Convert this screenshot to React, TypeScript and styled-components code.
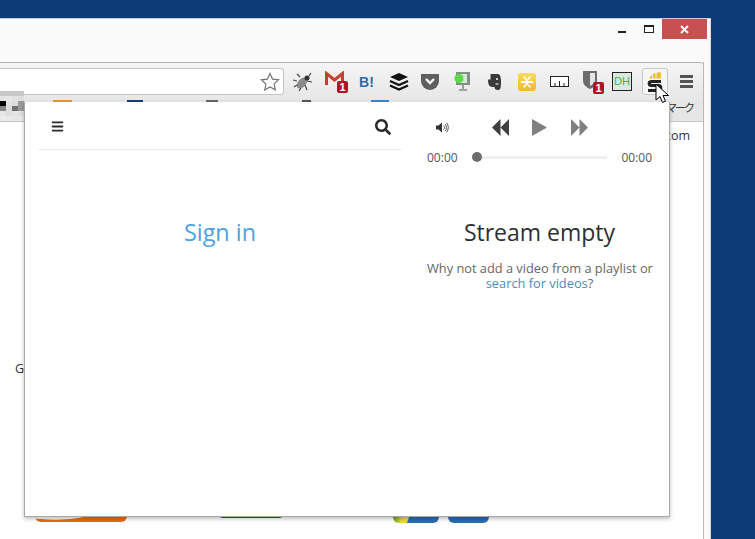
import React from 'react';
import styled, { createGlobalStyle, css } from 'styled-components';
import { FaBars, FaSearch } from 'react-icons/fa';

const GlobalStyle = createGlobalStyle`
  html, body {
    margin: 0;
    padding: 0;
    height: 539px;
    overflow: hidden;
    background: #0c3b78;
    font-family: "Open Sans", "Noto Sans CJK JP", sans-serif;
  }
`;

const Desktop = styled.div`
  width: 755px;
  height: 539px;
  padding-top: 18px;
  box-sizing: border-box;
  position: relative;
  overflow: hidden;
`;

const BrowserWindow = styled.div`
  width: 711px;
  height: 521px;
  box-sizing: border-box;
  background: #fafafa;
  border-top: 1px solid #c9ccd2;
  border-right: 1px solid #d8d8d8;
  display: flex;
  flex-direction: column;
`;

const TitleBar = styled.div`
  height: 43px;
  flex: none;
  display: flex;
  justify-content: flex-end;
  align-items: flex-start;
  padding-right: 3px;
`;

const Caption = styled.div`
  width: 27px;
  height: 20px;
  display: flex;
  align-items: center;
  justify-content: center;
`;

const CloseButton = styled.div`
  width: 45px;
  height: 20px;
  background: #c75050;
  display: flex;
  align-items: center;
  justify-content: center;
`;

const Chrome = styled.div`
  width: 704px;
  flex: 1;
  display: flex;
  flex-direction: column;
  border-right: 1px solid #b8b8b8;
  box-sizing: border-box;
  min-height: 0;
`;

const Toolbar = styled.div`
  height: 38px;
  flex: none;
  box-sizing: border-box;
  border-top: 1px solid #b2b2b2;
  border-top-right-radius: 3px;
  background: linear-gradient(#f5f5f5, #e7e7e7);
  display: flex;
  align-items: center;
`;

const Omnibox = styled.div`
  width: 284px;
  height: 27px;
  flex: none;
  box-sizing: border-box;
  background: #fff;
  border: 1px solid #c6c6c6;
  border-left: none;
  border-radius: 0 3px 3px 0;
  display: flex;
  align-items: center;
  justify-content: flex-end;
  padding-right: 3px;
`;

const Tool = styled.div<{ $w: number; $ml?: number; $active?: boolean }>`
  width: ${(p) => p.$w}px;
  margin-left: ${(p) => p.$ml ?? 0}px;
  height: 27px;
  flex: none;
  display: flex;
  align-items: center;
  justify-content: center;
  box-sizing: border-box;
  ${(p) =>
    p.$active &&
    css`
      border: 1px solid #c8c8c8;
      border-radius: 3px;
      background: #f6f6f6;
    `}
`;

const BookmarkBar = styled.div`
  height: 22px;
  flex: none;
  box-sizing: border-box;
  background: #e6e6e6;
  border-bottom: 1px solid #c8c8c8;
  display: flex;
  align-items: flex-start;
  padding-right: 8px;
  color: #333;
`;

const BookmarkTip = styled.span<{ $ml: number; $w: number; $c: string }>`
  margin-left: ${(p) => p.$ml}px;
  width: ${(p) => p.$w}px;
  height: 2px;
  background: ${(p) => p.$c};
  flex: none;
`;

const BookmarkLabel = styled.span`
  margin-left: auto;
  font-size: 11px;
  letter-spacing: -2px;
  line-height: 15px;
  padding: 0 2px 0 0;
`;

const Page = styled.div`
  flex: 1;
  min-height: 0;
  background: #fff;
  display: flex;
  flex-direction: column;
  font-size: 12.5px;
  color: #333;
`;

const PageDomain = styled.div`
  text-align: right;
  padding: 5px 13px 0 0;
  line-height: 17px;
`;

const PageLetter = styled.div`
  padding: 216px 0 0 15px;
  line-height: 17px;
`;

const TileRow = styled.div`
  margin-top: 123px;
  display: flex;
  align-items: flex-start;
  padding-left: 35px;
`;

const Tile = styled.div<{ $w: number; $h: number; $mr: number; $bg: string }>`
  width: ${(p) => p.$w}px;
  height: ${(p) => p.$h}px;
  margin-right: ${(p) => p.$mr}px;
  background: ${(p) => p.$bg};
  border-radius: 0 0 6px 6px;
`;

const Pixels = styled.div`
  position: absolute;
  left: 0;
  top: 91px;
  width: 24px;
  display: grid;
  grid-template-columns: repeat(4, 6px);
  grid-auto-rows: 5px;
`;

const Pixel = styled.span<{ $c: string }>`
  background: ${(p) => p.$c};
`;

const Popup = styled.div`
  position: absolute;
  left: 24px;
  top: 102px;
  width: 646px;
  height: 415px;
  box-sizing: border-box;
  background: #fff;
  border: 1px solid #a8a8a8;
  border-top: none;
  box-shadow: 0 2px 4px rgba(0, 0, 0, 0.25);
  display: flex;
`;

const LeftPane = styled.div`
  width: 364px;
  margin-left: 13px;
  flex: none;
  display: flex;
  flex-direction: column;
`;

const LeftHeader = styled.div`
  height: 48px;
  flex: none;
  box-sizing: border-box;
  border-bottom: 1px solid #ececec;
  display: flex;
  align-items: center;
  justify-content: space-between;
  padding: 2px 11px 0 13px;
  color: #2b2b2b;
`;

const SignIn = styled.a`
  margin-top: 64px;
  text-align: center;
  font-size: 23.4px;
  line-height: 36px;
  color: #4fa1dc;
`;

const RightPane = styled.div`
  flex: 1;
  min-width: 0;
  padding: 0 17px 0 25px;
  display: flex;
  flex-direction: column;
`;

const Controls = styled.div`
  height: 47px;
  flex: none;
  display: flex;
  align-items: center;
  padding: 3px 0 0 9px;
  box-sizing: border-box;
`;

const Transport = styled.div`
  margin-left: 42px;
  display: flex;
  align-items: center;
  gap: 23px;
`;

const SeekRow = styled.div`
  display: flex;
  align-items: center;
  height: 16px;
  font-size: 12px;
  color: #555;
`;

const Track = styled.div`
  flex: 1;
  height: 3px;
  margin: 0 14px;
  background: #efefef;
  position: relative;
`;

const Thumb = styled.div`
  position: absolute;
  left: 0;
  top: -4px;
  width: 10px;
  height: 10px;
  border-radius: 50%;
  background: #6e6e6e;
`;

const EmptyTitle = styled.div`
  margin-top: 49px;
  text-align: center;
  font-size: 23px;
  line-height: 36px;
  color: #2f2f2f;
`;

const EmptyText = styled.div`
  margin-top: 11px;
  text-align: center;
  font-size: 12.8px;
  line-height: 15px;
  color: #666;
  white-space: nowrap;
`;

const EmptyLink = styled.a`
  color: #4a8db8;
`;

const Cursor = styled.svg`
  position: absolute;
  left: 655px;
  top: 83px;
`;

const Hatena = styled.span`
  font-family: "Liberation Sans", sans-serif;
  font-weight: 700;
  font-size: 14px;
  color: #2d6aa8;
`;

const DhBox = styled.span`
  width: 18px;
  height: 17px;
  border: 1px solid #222;
  background: #dfe6df;
  color: #37b83c;
  font-family: "Liberation Sans", sans-serif;
  font-size: 11px;
  line-height: 17px;
  text-align: center;
`;

const Star = () => (
  <svg width="20" height="20" viewBox="0 0 20 20">
    <path d="M10 1.5l2.6 5.6 6 .7-4.5 4.1 1.2 6L10 15l-5.3 3 1.2-6L1.400 7.800l6-.7z" fill="#fff" stroke="#777" strokeWidth="1.200" />
  </svg>
);

const Bug = () => (
  <svg width="20" height="20" viewBox="0 0 20 20">
    <ellipse cx="9" cy="11" rx="4" ry="6.500" transform="rotate(40 9 11)" fill="#8a8a8a" />
    <circle cx="14" cy="6" r="2.500" fill="#333" />
    <path d="M7 5L4 2M4 9L0 8M4 13L1 15M8 16L6 19M12 13L14 18M14 9L19 10M16 4L18 1" stroke="#444" strokeWidth="1.200" />
  </svg>
);

const Gmail = () => (
  <svg width="25" height="22" viewBox="0 0 25 22">
    <rect x="2" y="1" width="19" height="13" fill="#f3ece6" />
    <path d="M3.500 14V2.500l8 6.500 8-6.500V14" fill="none" stroke="#c5402e" strokeWidth="3" />
    <rect x="14" y="10" width="11" height="12" rx="2" fill="#b01226" />
    <text x="19.500" y="20" textAnchor="middle" fontSize="11" fontWeight="700" fill="#fff" fontFamily="Liberation Sans">1</text>
  </svg>
);

const Buffer = () => (
  <svg width="20" height="18" viewBox="0 0 20 18">
    <path d="M10 0l9 4-9 4-9-4z" fill="#111" />
    <path d="M1 8l9 4 9-4M1 12.500l9 4 9-4" fill="none" stroke="#111" strokeWidth="2.200" />
  </svg>
);

const Pocket = () => (
  <svg width="20" height="18" viewBox="0 0 20 18">
    <path d="M1 1h18v7a9 9 0 0 1-18 0z" fill="#5f5f5f" />
    <path d="M6 6l4 4 4-4" fill="none" stroke="#fff" strokeWidth="2.400" />
  </svg>
);

const ScreenIcon = () => (
  <svg width="16" height="19" viewBox="0 0 16 19">
    <rect x="2" y="0" width="14" height="13" fill="#7f918a" />
    <rect x="5" y="2" width="8" height="9" fill="#d7e8d7" />
    <circle cx="5" cy="6.500" r="4.500" fill="#5ed84a" />
    <path d="M9 13v4M5 18h8" stroke="#8b8b8b" strokeWidth="1.600" />
  </svg>
);

const Elephant = () => (
  <svg width="15" height="18" viewBox="0 0 15 18">
    <path d="M3.500 1h7c2.500 0 3.500 2.500 3.500 8s-.5 8-3 8-3.500-1-3.500-3H5.500C2 14 1 11 1 6.500H3.500z" fill="#3a3a3a" />
    <circle cx="10" cy="6" r="1" fill="#fff" />
    <path d="M8.500 11h3" stroke="#fff" />
  </svg>
);

const Spark = () => (
  <svg width="18" height="18" viewBox="0 0 18 18">
    <defs>
      <linearGradient id="sparkFill" x1="0" y1="0" x2="0" y2="1">
        <stop offset="0" stopColor="#f8dc58" />
        <stop offset="1" stopColor="#f5b53c" />
      </linearGradient>
    </defs>
    <rect width="18" height="18" rx="3" fill="url(#sparkFill)" />
    <path d="M5.500 3.500L9 7.500l3.500-4M5.500 14.500L9 10.500l3.500 4" fill="none" stroke="#fff" strokeWidth="1.600" />
    <rect x="3" y="8" width="12" height="2" fill="#fff" />
  </svg>
);

const Ruler = () => (
  <svg width="20" height="12" viewBox="0 0 20 12">
    <rect x="0.500" y="0.500" width="18" height="10" fill="#fff" stroke="#222" />
    <path d="M5 10.500V7M9.500 10.500V5M14 10.500V7" stroke="#222" />
  </svg>
);

const Shield = () => (
  <svg width="22" height="24" viewBox="0 0 22 24">
    <path d="M1 1h14v9c0 5-3 7-7 9-4-2-7-4-7-9z" fill="#6b6b6b" />
    <path d="M8 3h5v7c0 3-2 4-5 6z" fill="#e3e3e3" />
    <rect x="11" y="12" width="11" height="12" rx="2" fill="#b01226" />
    <text x="16.500" y="22" textAnchor="middle" fontSize="11" fontWeight="700" fill="#fff" fontFamily="Liberation Sans">1</text>
  </svg>
);

const SMark = () => (
  <svg width="20" height="24" viewBox="0 0 20 24">
    <path d="M4 8.500a12 12 0 0 1 12-6v6z" fill="#f0bf2e" />
    <path d="M7.500 3v6M11 2v6" stroke="#f6f6f6" strokeWidth="1" />
    <path d="M16 11.500H6.500c-3 0-3 4 0 4h7c3 0 3 5 0 5H3" fill="none" stroke="#222" strokeWidth="3.200" />
  </svg>
);

const MenuBars = () => (
  <svg width="13" height="13" viewBox="0 0 13 13">
    <path d="M0 1.500h13M0 6.500h13M0 11.500h13" stroke="#555" strokeWidth="2.800" />
  </svg>
);

const Speaker = () => (
  <svg width="14" height="11" viewBox="0 0 14 11">
    <path d="M0 3.500h2.500L6 0.500v10L2.500 7.500H0z" fill="#333" />
    <path d="M7.500 3.500a2.500 2.500 0 0 1 0 4M9 2a5 5 0 0 1 0 7M10.500 .8a7 7 0 0 1 0 9.400" fill="none" stroke="#444" strokeWidth="0.900" />
  </svg>
);

const Rewind = () => (
  <svg width="17" height="17" viewBox="0 0 17 17">
    <path d="M8.500 0v17L0 8.500zM17 0v17L8.500 8.500z" fill="#404040" />
  </svg>
);

const PlayIcon = () => (
  <svg width="15" height="17" viewBox="0 0 15 17">
    <path d="M0 0l15 8.500L0 17z" fill="#808080" />
  </svg>
);

const FastForward = () => (
  <svg width="18" height="17" viewBox="0 0 18 17">
    <path d="M1 0l8.500 8.500L1 17zM9.500 0L18 8.500 9.500 17z" fill="#808080" />
  </svg>
);

const CaptionMin = () => (
  <svg width="8" height="8" viewBox="0 0 8 8">
    <rect y="6" width="8" height="2" fill="#222" />
  </svg>
);

const CaptionMax = () => (
  <svg width="10" height="8" viewBox="0 0 10 8">
    <rect x="0.500" y="0.500" width="9" height="7" fill="none" stroke="#222" />
    <rect width="10" height="2" fill="#222" />
  </svg>
);

const CaptionClose = () => (
  <svg width="9" height="9" viewBox="0 0 9 9">
    <path d="M1 1l7 7M8 1L1 8" stroke="#fff" strokeWidth="1.800" />
  </svg>
);

const pixelColors = [
  '#c8c8c8', '#c8c8c8', '#c8c8c8', '#c8c8c8',
  '#e4e4e4', '#e6e6e6', '#e2e2e2', '#dedede',
  '#000', '#e2e2e2', '#dcdcdc', '#9a9a9a',
  '#888', '#dcdcdc', '#707070', '#9a9a9a',
  '#e6e6e6', '#dedede', '#e4e4e4', '#e0e0e0',
  '#ececec', '#e8e8e8', '#e6e6e6', '#e8e8e8',
];

export default function App() {
  return (
    <Desktop>
      <GlobalStyle />
      <BrowserWindow>
        <TitleBar>
          <Caption><CaptionMin /></Caption>
          <Caption><CaptionMax /></Caption>
          <CloseButton><CaptionClose /></CloseButton>
        </TitleBar>
        <Chrome>
          <Toolbar>
            <Omnibox><Star /></Omnibox>
            <Tool $w={37}><Bug /></Tool>
            <Tool $w={29}><Gmail /></Tool>
            <Tool $w={33}><Hatena>B!</Hatena></Tool>
            <Tool $w={31}><Buffer /></Tool>
            <Tool $w={32}><Pocket /></Tool>
            <Tool $w={32}><ScreenIcon /></Tool>
            <Tool $w={33}><Elephant /></Tool>
            <Tool $w={32}><Spark /></Tool>
            <Tool $w={33}><Ruler /></Tool>
            <Tool $w={34}><Shield /></Tool>
            <Tool $w={24}><DhBox>DH</DhBox></Tool>
            <Tool $w={26} $ml={8} $active><SMark /></Tool>
            <Tool $w={36}><MenuBars /></Tool>
          </Toolbar>
          <BookmarkBar>
            <BookmarkTip $ml={53} $w={19} $c="#e8962c" />
            <BookmarkTip $ml={55} $w={16} $c="#123f75" />
            <BookmarkTip $ml={63} $w={12} $c="#666" />
            <BookmarkTip $ml={84} $w={9} $c="#555" />
            <BookmarkTip $ml={60} $w={18} $c="#3f83d0" />
            <BookmarkLabel>マーク</BookmarkLabel>
          </BookmarkBar>
          <Page>
            <PageDomain>.com</PageDomain>
            <PageLetter>G</PageLetter>
            <TileRow>
              <Tile
                $w={92}
                $h={22}
                $mr={90}
                $bg="radial-gradient(ellipse 60px 20px at 20px 0, #fff 96%, #ef6c0c 100%)"
              />
              <Tile $w={68} $h={18} $mr={108} $bg="#2a4f96" />
              <Tile
                $w={46}
                $h={23}
                $mr={9}
                $bg="linear-gradient(110deg, #5a9a2a 12%, #ecdc3a 30%, #ecdc3a 40%, #2a6db5 42%)"
              />
              <Tile $w={41} $h={23} $mr={0} $bg="#2a6db5" />
            </TileRow>
          </Page>
        </Chrome>
      </BrowserWindow>
      <Pixels>
        {pixelColors.map((c, i) => (
          <Pixel key={i} $c={c} />
        ))}
      </Pixels>
      <Popup>
        <LeftPane>
          <LeftHeader>
            <FaBars size={13} />
            <FaSearch size={16} />
          </LeftHeader>
          <SignIn>Sign in</SignIn>
        </LeftPane>
        <RightPane>
          <Controls>
            <Speaker />
            <Transport>
              <Rewind />
              <PlayIcon />
              <FastForward />
            </Transport>
          </Controls>
          <SeekRow>
            00:00
            <Track><Thumb /></Track>
            00:00
          </SeekRow>
          <EmptyTitle>Stream empty</EmptyTitle>
          <EmptyText>
            Why not add a video from a playlist or
            <br />
            <EmptyLink>search for videos</EmptyLink>?
          </EmptyText>
        </RightPane>
      </Popup>
      <Cursor width="14" height="21" viewBox="0 0 14 21">
        <path d="M1 1v16l4-3.500 2.500 6 3-1.300-2.500-5.700h5.500z" fill="#fff" stroke="#000" strokeWidth="1" />
      </Cursor>
    </Desktop>
  );
}
